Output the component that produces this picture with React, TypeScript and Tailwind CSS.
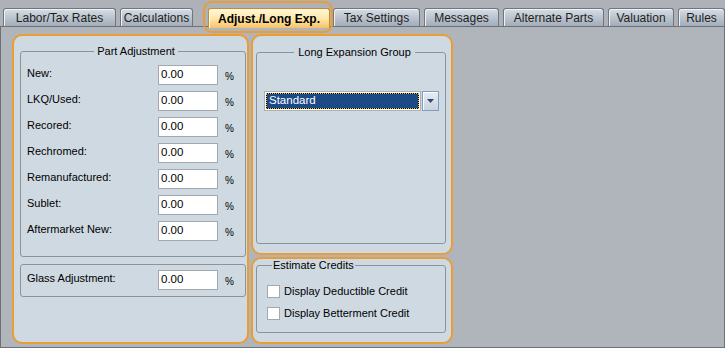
import React from "react";

const FONT = { fontFamily: '"Liberation Sans", Arial, sans-serif' };

const TABS = [
  { name: "Labor/Tax Rates", w: "w-[113px]" },
  { name: "Calculations", w: "w-[73px]" },
  { name: "Adjust./Long Exp.", w: "w-[122px]", active: true },
  { name: "Tax Settings", w: "w-[87px]" },
  { name: "Messages", w: "w-[75px]" },
  { name: "Alternate Parts", w: "w-[101px]" },
  { name: "Valuation", w: "w-[66px]" },
  { name: "Rules", w: "w-[47px]" },
];

const PART_ROWS = [
  "New:",
  "LKQ/Used:",
  "Recored:",
  "Rechromed:",
  "Remanufactured:",
  "Sublet:",
  "Aftermarket New:",
];

const PercentRow = ({ label }: { label: string }) => (
  <div className="flex items-center h-[20px]">
    <span className="w-[131px] -mt-[3px]">{label}</span>
    <div className="w-[60px] h-[20px] bg-white border border-[#a2a8ae] flex items-center pl-[2px] text-[11.5px]">
      0.00
    </div>
    <span className="ml-[7px] mt-[3px] text-[10px]">%</span>
  </div>
);

const Checkbox = ({ label }: { label: string }) => (
  <label className="flex items-center h-[13px]">
    <span className="w-[13px] h-[13px] bg-white border border-[#a4a8ac]" />
    <span className="ml-[4px]">{label}</span>
  </label>
);

export default function App() {
  return (
    <div
      className="w-[725px] h-[348px] flex flex-col bg-[#aeb2b8] text-[11px] text-black overflow-hidden"
      style={FONT}
    >
      {/* Tab strip */}
      <div className="h-[26px] flex items-end pl-[3px] gap-[4px] relative z-10">
        {TABS.map((tab) =>
          tab.active ? (
            <div key={tab.name} className={`relative ${tab.w} h-[20px] ml-[11px] mr-[-1px] -mb-[2px]`}>
              <div className="absolute -left-[5px] -right-[3px] -top-[7px] -bottom-[5px] border-2 border-[#ec9d31] rounded-[9px]" />
              <div className="h-full flex items-center justify-center font-bold text-[12px] rounded-t-[3px] border border-[#c98a2a] border-b-0 bg-gradient-to-b from-[#fff8de] via-[#ffe7a8] to-[#f6c26a] shadow-[inset_1px_0_0_#ffffff]">
                {tab.name}
              </div>
            </div>
          ) : (
            <div
              key={tab.name}
              className={`${tab.w} h-[18px] flex items-center justify-center text-[12px] text-[#1e1e1e] rounded-t-[3px] border border-[#6f767d] border-b-0 bg-gradient-to-b from-[#d6dde5] to-[#a2adb9] shadow-[inset_1px_1px_0_#eef2f6]`}
            >
              {tab.name}
            </div>
          )
        )}
      </div>

      {/* Content */}
      <div className="flex-1 border border-[#6d7278] bg-[#b0b4bb] pl-[11px] pt-[7px] flex gap-[2px]">
        {/* Left panel */}
        <div className="w-[237px] h-[310px] border-2 border-[#ec9d31] rounded-[10px] bg-[#cfd9e2] pl-[6px] pt-[9px]">
          <fieldset className="w-[226px] border border-[#8c949b] rounded-[3px] pl-[6px] pt-[7px] pb-[15px]">
            <legend className="mx-auto px-[3px] leading-[13px]">Part Adjustment</legend>
            <div className="flex flex-col gap-[6px]">
              {PART_ROWS.map((r) => (
                <PercentRow key={r} label={r} />
              ))}
            </div>
          </fieldset>
          <div className="w-[226px] mt-[7px] border border-[#8c949b] rounded-[3px] pl-[6px] pt-[5px] pb-[6px]">
            <PercentRow label="Glass Adjustment:" />
          </div>
        </div>

        {/* Right column */}
        <div className="flex flex-col gap-[2px]">
          <div className="w-[202px] h-[221px] border-2 border-[#ec9d31] rounded-[10px] bg-[#cfd9e2] pl-[3px] pt-[10px]">
            <fieldset className="w-[190px] h-[198px] border border-[#8c949b] rounded-[3px] pl-[7px] pt-[32px]">
              <legend className="mx-auto px-[4px] leading-[13px]">Long Expansion Group</legend>
              <div className="flex items-center gap-[1px]">
                <div className="w-[157px] h-[20px] border border-[#a9b1b9] bg-white p-[1px]">
                  <div className="h-full bg-black">
                    <div className="h-full border border-dotted border-[#f2c13c] bg-[#1c4a87] bg-clip-padding text-white flex items-center pl-[2px] text-[11.5px]">
                      Standard
                    </div>
                  </div>
                </div>
                <div className="w-[17px] h-[20px] border border-[#7e9cc6] bg-gradient-to-b from-[#e6ecf2] to-[#c9d3dd] shadow-[inset_1px_1px_0_#ffffff] flex items-center justify-center">
                  <svg width="8" height="5" viewBox="0 0 8 5">
                    <path d="M0 0H7L3.5 4Z" fill="#2f4a72" />
                  </svg>
                </div>
              </div>
            </fieldset>
          </div>
          <div className="w-[202px] h-[87px] border-2 border-[#ec9d31] rounded-[10px] bg-[#cfd9e2] pl-[3px]">
            <fieldset className="w-[190px] h-[74px] border border-[#8c949b] rounded-[3px] pl-[10px] pt-[13px]">
              <legend className="ml-[5px] px-[1px] leading-[13px]">Estimate Credits</legend>
              <div className="flex flex-col gap-[9px]">
                <Checkbox label="Display Deductible Credit" />
                <Checkbox label="Display Betterment Credit" />
              </div>
            </fieldset>
          </div>
        </div>
      </div>
    </div>
  );
}
